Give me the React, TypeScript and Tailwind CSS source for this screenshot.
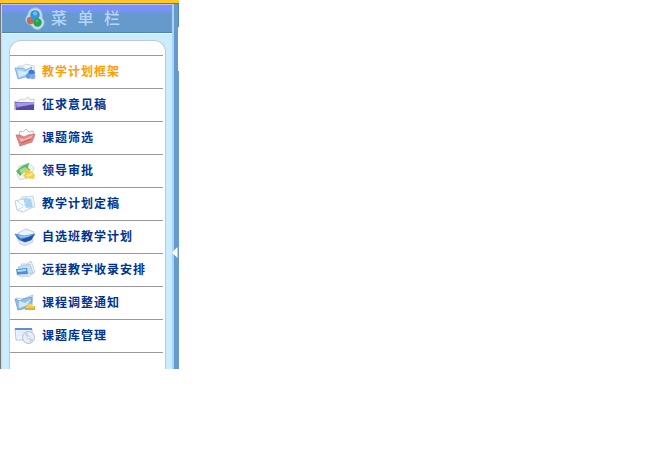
import type { ReactNode } from 'react';

type IconName = 'plan' | 'draft' | 'topic' | 'approve' | 'final' | 'elective' | 'remote' | 'notice' | 'library';

const drawings: Record<IconName, ReactNode> = {
  plan: (
    <>
      <path d="m4 3 5 0 3-2 8 2 1 7-14 5Z" fill="#f2f8fd" stroke="#bccbd8" strokeWidth=".8" />
      <path d="m1 5 3 11 11-3 3-9-6 3-3-2Z" fill="#a5cff4" stroke="#6f9dcb" strokeWidth=".7" />
      <path d="m4 7 7 2 6-4-3 6-9 3Z" fill="#d5eafb" />
      <circle cx="17.500" cy="10" r="3.300" fill="#3b7bd0" />
      <circle cx="14.500" cy="13" r="2.700" fill="#5c9ce2" />
      <circle cx="18.500" cy="13.500" r="2.800" fill="#79ace8" />
    </>
  ),
  draft: (
    <>
      <path d="m3 5 5-2 2 1 4-3 2 3 4-1v10H2Z" fill="#fafafa" stroke="#c4c1c8" strokeWidth=".8" />
      <path d="M1 6h19v8H2Z" fill="#7568c4" />
      <path d="m2 7 18-1v2L3 11Z" fill="#a79ce2" />
      <path d="M2 12c7-1 11-3 18-3v5H2Z" fill="#5548a9" />
      <path d="M1 5v9" stroke="#8c859d" />
    </>
  ),
  topic: (
    <>
      <path d="m5 6 1-4 3 1 3-3 3 3 4-1 1 7-12 4Z" fill="#fff" stroke="#b5a9a9" strokeWidth=".8" />
      <path d="m2 6 4 11 12-4 3-8-7 1-4 2-4-2Z" fill="#e08482" stroke="#bd7472" strokeWidth=".7" />
      <path d="m5 9 5 1 9-4-2 3-10 4Z" fill="#f6b9b4" />
      <path d="m7 14 10-4" stroke="#c6595a" />
    </>
  ),
  approve: (
    <>
      <path d="m3 13 2-9 10-3 5 5-3 9-11 3Z" fill="#eef7ee" stroke="#c3d0c4" strokeWidth=".7" />
      <path d="m2 9 6-5 7-3-1 5 3 2-6 1-5 5Z" fill="#5bb868" />
      <path d="m5 8 6-3 4 3-7 4Z" fill="#a4dc95" />
      <circle cx="13.500" cy="10" r="2.800" fill="#f3c936" />
      <path d="m9 13 8-4 4 4-1 4-9-1Z" fill="#f6ce49" />
      <path d="m12 13 5-2 2 2-5 2Z" fill="#ffe98c" />
    </>
  ),
  final: (
    <>
      <path d="m7 2 12-1 2 11-12 3Z" fill="#eaf6fe" stroke="#c1ced9" strokeWidth=".8" />
      <path d="m1 6 12-3 4 10-8 4-6-2Z" fill="#f8fbfe" stroke="#a9bac9" strokeWidth=".7" />
      <path d="m9 3 8 1 2 8-7 1Z" fill="#a7d2f4" />
      <path d="m3 6 7 5 3-6M3 15l6-3" stroke="#c2dff5" fill="none" />
    </>
  ),
  elective: (
    <>
      <path d="m4 5 8-4 8 3-3 9-7 3Z" fill="#e9f4fd" stroke="#b4c5d3" strokeWidth=".8" />
      <path d="m4 12 2 4 5 2 8-4-1-5Z" fill="#dfe5eb" stroke="#b9c2cc" strokeWidth=".6" />
      <path d="m1 6 9 2 11-2-4 6-6 2-7-3Z" fill="#4589d8" stroke="#3c6cb0" strokeWidth=".6" />
      <path d="m3 7 8 1 8-2-5 3-7 1Z" fill="#8cc7f6" />
      <path d="m12 10 8-3-3 5-6 2-5-2Z" fill="#234fa7" />
    </>
  ),
  remote: (
    <>
      <path d="m7 3 6 0 4-3 4 11-7 5Z" fill="#f2f5f8" stroke="#b9c2cc" strokeWidth=".8" />
      <path d="m4 6 12-3 3 9-10 2Z" fill="#c4e0f5" stroke="#9bb5cb" strokeWidth=".6" />
      <path d="m2 8 11-1 1 6-11 1Z" fill="#4b92d2" />
      <path d="m3 9 9-1v2l-8 1Z" fill="#a8dcfb" />
      <path d="m2 14 12-1 1 2-7 2Z" fill="#d5dfe7" />
    </>
  ),
  notice: (
    <>
      <path d="m2 4 7 1 10-4-1 11-12 4Z" fill="#eef7fd" stroke="#a8bccf" strokeWidth=".8" />
      <path d="m1 5 5 2 3-2 9-2-1 9-13 4Z" fill="#8fc0ec" stroke="#6691bf" strokeWidth=".7" />
      <path d="m5 7 6 2 6-4-4 6-8 3Z" fill="#d5ebfb" />
      <path d="M13 12q3-5 6 0v2h-6Z" fill="#f4d565" />
      <path d="M11 12h10v4H11Z" fill="#e2ad32" />
      <path d="M12 13h8" stroke="#ffe58a" />
    </>
  ),
  library: (
    <>
      <path d="M1 2h17v11H2Z" fill="#eef4fd" stroke="#a7bad9" strokeWidth=".8" />
      <path d="M1 2h17" stroke="#3b74c0" strokeWidth="1.5" />
      <path d="M3 5h10M3 8h7" stroke="#d5e2f4" />
      <circle cx="14.500" cy="10.500" r="6" fill="#e9f0fa" stroke="#9eafd0" strokeWidth=".8" />
      <path d="m14.5 10.500-4-3 3-2.500ZM14.500 10.500l5 2-3 3Z" fill="#bfd4f1" />
      <circle cx="14.500" cy="10.500" r="1.500" fill="#fff" stroke="#a6b5d0" strokeWidth=".6" />
    </>
  ),
};

const items: { label: string; icon: IconName; active?: boolean }[] = [
  { label: '教学计划框架', icon: 'plan', active: true },
  { label: '征求意见稿', icon: 'draft' },
  { label: '课题筛选', icon: 'topic' },
  { label: '领导审批', icon: 'approve' },
  { label: '教学计划定稿', icon: 'final' },
  { label: '自选班教学计划', icon: 'elective' },
  { label: '远程教学收录安排', icon: 'remote' },
  { label: '课程调整通知', icon: 'notice' },
  { label: '课题库管理', icon: 'library' },
];

function MenuItem({ label, icon, active }: { label: string; icon: IconName; active?: boolean }) {
  return (
    <li className="flex h-[33px] items-center border-b border-[#999] pl-1">
      <svg viewBox="0 0 22 18" className="h-[18px] w-[22px] shrink-0">{drawings[icon]}</svg>
      <span className={`ml-1.5 pb-px whitespace-nowrap text-[12px] leading-4 font-bold tracking-[1px] ${active ? 'text-[#ff9c0a]' : 'text-[#003390]'}`}>
        {label}
      </span>
    </li>
  );
}

function Header() {
  return (
    <header className="flex h-[29px] shrink-0 items-center border-t border-b border-t-[#b9c8f4] border-b-[#4d82b9] bg-linear-to-b from-[#7b91ff] from-15% via-[#6699cc] via-35% to-[#6699cc] pl-[22px]">
      <svg viewBox="0 0 22 24" className="h-6 w-[22px] shrink-0">
        <path d="M10 1C4 2 5 7 3 9c-3 5 0 8 4 9 2 4 7 6 10 3 4-3 4-7 1-10C19 5 16 0 10 1Z" fill="#c3dcf0" stroke="#9cc1e3" />
        <circle cx="6.500" cy="13.500" r="3.700" fill="#c76b51" />
        <circle cx="11" cy="8" r="4.800" fill="#3195df" />
        <circle cx="13.500" cy="15.500" r="4.200" fill="#24a549" />
        <circle cx="11" cy="6.500" r="2" fill="#70bff0" />
        <circle cx="13" cy="14" r="1.300" fill="#57c365" />
      </svg>
      <h1 className="ml-[5px] whitespace-nowrap text-[16px] leading-5 font-medium tracking-[10.5px] text-[#b5d5fa]">菜单栏</h1>
    </header>
  );
}

export default function App() {
  return (
    <div className="h-[450px] w-[660px] overflow-hidden bg-white font-['Liberation_Sans','Noto_Sans_CJK_SC',sans-serif]">
      <aside className="flex h-[369px] w-[179px] flex-col">
        <div className="h-[3px] shrink-0 bg-[#ffc82c]" />
        <div className="flex min-h-0 flex-1 border-t border-[#6d7580]">
          <div className="w-px bg-[#777]" />
          <div className="w-px bg-[#d7d7d0]" />
          <div className="flex w-[170px] flex-col bg-[#cbecff]">
            <Header />
            <div className="h-px shrink-0 bg-[#e5f7ff]" />
            <div className="mt-[6px] mr-[6px] ml-[7px] flex-1 rounded-t-[12px] border border-b-0 border-[#bccbd0] bg-white">
              <div className="mr-[2px] h-[15px] border-b border-[#999]" />
              <ul className="mr-[2px]">
                {items.map((item) => <MenuItem key={item.label} {...item} />)}
              </ul>
            </div>
          </div>
          <div className="w-[2px] bg-[#a6d4fa]" />
          <div className="flex w-[5px] flex-col bg-[#6699cc]">
            <div className="ml-1 h-[23px] w-px bg-[#5288b7]" />
            <div className="ml-1 h-[44px] w-px bg-white" />
            <svg viewBox="0 0 6 11" className="mt-[176px] -ml-[2px] h-[11px] w-[6px] shrink-0">
              <path d="M5.500 0v11L0 5.500Z" fill="#fff" />
            </svg>
          </div>
        </div>
      </aside>
    </div>
  );
}
